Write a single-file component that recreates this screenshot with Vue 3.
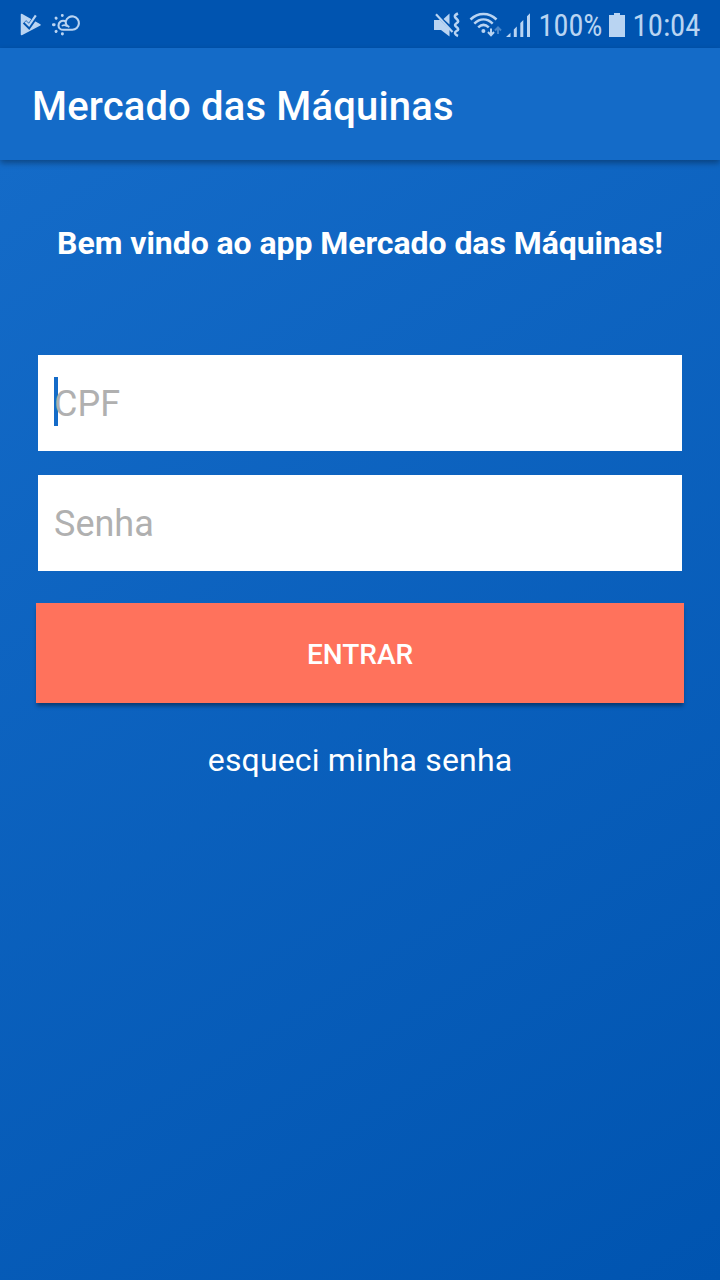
<script setup>
import { ref } from 'vue'

const cpf = ref('')
const senha = ref('')
</script>

<template>
  <div class="screen">
    <div class="status-bar">
      <svg class="status-left" width="90" height="48" viewBox="0 0 90 48">
        <path d="M21.5 14.5 L40 24.8 L21.5 34.5 Z" class="fill" stroke="#b9d4f2" stroke-width="1.5" stroke-linejoin="round" />
        <path d="M24.5 21.8 L29 26.4 L37 15" fill="none" stroke="#0054b0" stroke-width="4.6" />
        <path d="M25.3 21.8 L29 25.4 L35.8 15.3" class="line" stroke-width="2.2" />
        <g class="line" stroke-width="2.1" stroke-linecap="round">
          <path d="M64.8 21 C61.5 20 58.5 22 58.5 25.4 C58.5 28 60.5 29.8 63.3 29.8 H72.3 A6.7 6.7 0 1 0 65.8 21.2 C65.4 23.5 66.6 25.6 68.6 26.6" />
          <path d="M62.3 25.6 C63.8 24.8 65.3 25 66.4 26" stroke-width="1.6" />
          <path d="M62.3 15.4 V15.6 M56 18 L56.2 18.2 M53.4 24.8 H54.2 M56 31.4 L56.2 31.2 M62.4 33.6 V34" stroke-width="2.9" />
        </g>
      </svg>
      <svg class="status-right" width="300" height="48" viewBox="420 0 300 48">
        <!-- muted / vibrate -->
        <path class="fill" d="M434 20 H440 L449.5 29.5 V36.5 L441 30 H434 Z M443.5 19 L449.5 13.5 V24.5 Z" />
        <path class="line" d="M436 14.2 L452.5 32" stroke-width="2.2" />
        <path class="line" d="M458 13.5 C453.5 15.5 454.5 17 456.5 18.8 C459 21 458.5 22 456.5 23.2 C454.5 24.5 454.5 25.5 456.5 27 C459 29 458.5 30 456.5 31 C454 32.5 454.5 34.5 458 36" stroke-width="2.5" />
        <!-- wifi -->
        <g class="line" stroke-width="2.5">
          <path d="M470.5 19.5 C478 12 489 12 496.5 19.5" />
          <path d="M474.3 23.6 C480 18.2 487 18.2 492.7 23.6" />
          <path d="M478.2 27.4 C481.5 24.3 485.5 24.3 488.8 27.4" />
        </g>
        <circle class="fill" cx="483.4" cy="31" r="2" />
        <path class="line" d="M491 28.5 V35 M488 32 L491 35.2 L494 32" stroke-width="2" />
        <path class="line dim" d="M498 34 V28 M495 30.5 L498 27.5 L501 30.5" stroke-width="2" />
        <!-- signal -->
        <path class="fill" d="M506 37 L510.5 32.8 V37 Z M513.8 29.5 L516.8 26.5 V37 H513.8 Z M520.3 23 L523.3 20 V37 H520.3 Z M527 16.2 L530 13.2 V37 H527 Z" />
        <text x="538.5" y="36" textLength="64" lengthAdjust="spacingAndGlyphs">100%</text>
        <path class="fill" d="M614 13 H620 V15 H625 V37 H609 V15 H614 Z" />
        <text x="632.5" y="36" textLength="68" lengthAdjust="spacingAndGlyphs">10:04</text>
      </svg>
    </div>
    <header class="toolbar">
      <h1>Mercado das Máquinas</h1>
    </header>
    <main class="content">
      <p class="welcome">Bem vindo ao app Mercado das Máquinas!</p>
      <form class="login" @submit.prevent>
        <div class="field">
          <span class="cursor"></span>
          <input v-model="cpf" type="text" placeholder="CPF" />
        </div>
        <div class="field">
          <input v-model="senha" type="password" placeholder="Senha" />
        </div>
        <button type="submit">ENTRAR</button>
      </form>
      <a class="forgot">esqueci minha senha</a>
    </main>
  </div>
</template>

<style>
body {
  margin: 0;
}
</style>

<style scoped>
.screen {
  width: 720px;
  height: 1280px;
  display: flex;
  flex-direction: column;
  overflow: hidden;
  font-family: Roboto, "Liberation Sans", sans-serif;
  color: #fff;
}

.status-bar {
  height: 48px;
  display: flex;
  justify-content: space-between;
  background: #0054b0;
}

.status-bar text {
  font-family: "Roboto Condensed", Roboto, sans-serif;
  font-size: 31px;
  fill: #b9d4f2;
}

.fill {
  fill: #b9d4f2;
}

.line {
  fill: none;
  stroke: #b9d4f2;
}

.dim {
  opacity: 0.4;
}

.toolbar {
  height: 112px;
  padding: 0 32px;
  display: flex;
  align-items: center;
  background: #146bc8;
  box-shadow: 0 3px 6px rgba(0, 0, 0, 0.34);
  z-index: 1;
}

h1 {
  margin: 6px 0 0;
  font-size: 40px;
  font-weight: 500;
  line-height: 48px;
  letter-spacing: 0.16px;
}

.content {
  flex: 1;
  display: flex;
  flex-direction: column;
  align-items: center;
  background: linear-gradient(147.3deg, #146bc8, #0054b0);
}

.welcome {
  margin: 64px 0 0;
  font-size: 32px;
  font-weight: 700;
  line-height: 38px;
  letter-spacing: -0.06px;
  white-space: nowrap;
}

.login {
  width: 648px;
  margin-top: 93px;
  display: flex;
  flex-direction: column;
}

.field {
  position: relative;
  height: 96px;
  margin: 0 2px 24px;
  background: #fff;
}

.field input {
  width: 100%;
  height: 96px;
  box-sizing: border-box;
  padding: 2px 16px 0;
  border: 0;
  outline: none;
  background: transparent;
  font-family: inherit;
  font-size: 36px;
  color: #333;
  position: relative;
}

.field input::placeholder {
  color: #b0b0b0;
  opacity: 1;
}

.cursor {
  position: absolute;
  left: 16px;
  top: 22px;
  width: 4px;
  height: 49px;
  background: #146bc8;
}

button {
  height: 100px;
  margin-top: 8px;
  padding: 2px 0 0;
  border: 0;
  background: #ff725c;
  box-shadow: 0 4px 4px -1px rgba(0, 0, 0, 0.4);
  font-family: inherit;
  font-size: 28px;
  font-weight: 500;
  color: #fff;
}

.forgot {
  margin-top: 38px;
  font-size: 32px;
  line-height: 38px;
  letter-spacing: 0.16px;
}
</style>
